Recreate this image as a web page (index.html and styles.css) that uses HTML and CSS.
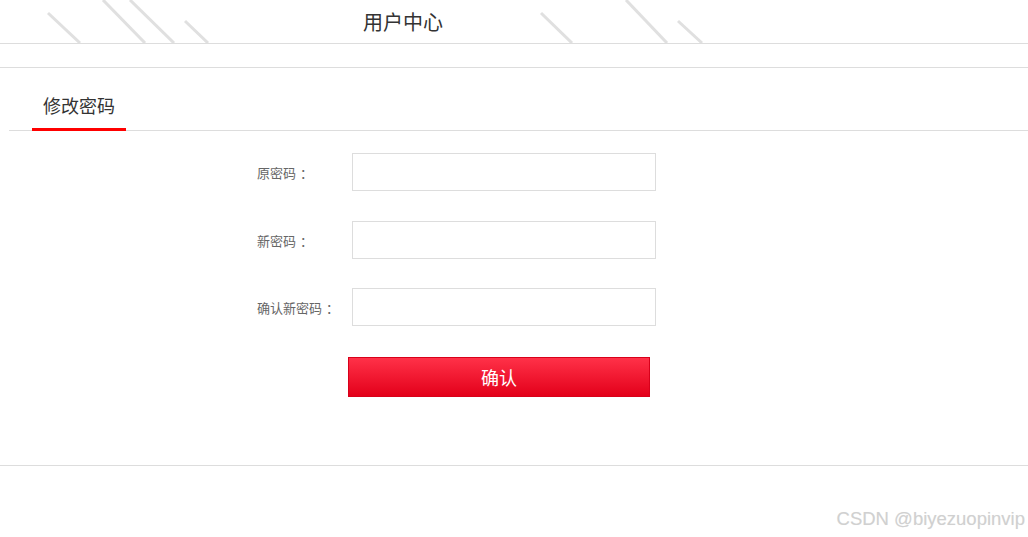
FILE: index.html
```html
<!DOCTYPE html>
<html lang="zh-CN">
<head>
  <meta charset="UTF-8" />
  <meta name="viewport" content="width=device-width, initial-scale=1.0"/>
  <title>用户中心</title>
  <link rel="stylesheet" href="styles.css">
</head>
<body>
  <div class="header">
    <svg class="stripes" width="1028" height="43" viewBox="0 0 1028 43">
      <g stroke="#e0e0e0" stroke-width="3">
        <line x1="48" y1="13" x2="80" y2="43"/>
        <line x1="103" y1="0" x2="145" y2="43"/>
        <line x1="130" y1="0" x2="174" y2="43"/>
        <line x1="185" y1="21" x2="208" y2="43"/>
        <line x1="541" y1="13" x2="572" y2="43"/>
        <line x1="626" y1="0" x2="667" y2="43"/>
        <line x1="678" y1="21" x2="702" y2="43"/>
      </g>
    </svg>
    <span class="header-title">用户中心</span>
  </div>

  <div class="panel">
    <div class="tabs">
      <div class="tab active">修改密码</div>
    </div>

    <form class="pwd-form" onsubmit="return false">
      <div class="row">
        <label>原密码<span class="colon">：</span></label>
        <input type="password" />
      </div>
      <div class="row">
        <label>新密码<span class="colon">：</span></label>
        <input type="password" />
      </div>
      <div class="row">
        <label>确认新密码<span class="colon">：</span></label>
        <input type="password" />
      </div>
      <button type="submit">确认</button>
    </form>
  </div>

  <div class="watermark">CSDN @biyezuopinvip</div>
</body>
</html>
```

FILE: styles.css
```css
body {
  margin: 0;
  font-family: "Noto Sans CJK SC", "Liberation Sans", sans-serif;
  background: white;
  color: #333;
}
.header {
  position: relative;
  height: 43px;
  border-bottom: 1px solid #ddd;
}
.stripes {
  position: absolute;
  left: 0;
  top: 0;
}
.header-title {
  position: relative;
  display: block;
  padding-left: 363px;
  font-size: 20px;
  line-height: 43px;
  color: #333;
}
.panel {
  margin-top: 23px;
  border-top: 1px solid #ddd;
  border-bottom: 1px solid #ddd;
}
.tabs {
  display: flex;
  margin-left: 9px;
  border-bottom: 1px solid #ddd;
}
.tab {
  width: 94px;
  margin-left: 23px;
  margin-bottom: -1px;
  padding: 22px 0 8px;
  font-size: 18px;
  line-height: 30px;
  text-align: center;
  color: #333;
}
.tab.active {
  border-bottom: 3px solid #ff0000;
}
.pwd-form {
  padding: 22px 0 68px;
}
.row {
  display: flex;
  align-items: center;
  padding-left: 257px;
  margin-bottom: 30px;
}
.row:nth-child(2) {
  margin-bottom: 29px;
}
.row label {
  width: 95px;
  font-size: 13px;
  color: #666;
}
.colon {
  margin-left: 4px;
}
.row input {
  box-sizing: border-box;
  width: 304px;
  height: 38px;
  border: 1px solid #ddd;
  padding: 0 8px;
  outline: none;
}
button {
  display: block;
  box-sizing: border-box;
  margin: 31px 0 0 348px;
  width: 302px;
  height: 40px;
  border: 1px solid #d8001a;
  background: linear-gradient(#ff3148, #e3001a);
  color: white;
  font-family: inherit;
  font-size: 18px;
  cursor: pointer;
}
.watermark {
  position: absolute;
  right: 3px;
  top: 508px;
  font-family: "Liberation Sans", sans-serif;
  font-size: 18.5px;
  color: #d0d0d0;
  text-shadow: 0 0 1px #eee;
}
```
